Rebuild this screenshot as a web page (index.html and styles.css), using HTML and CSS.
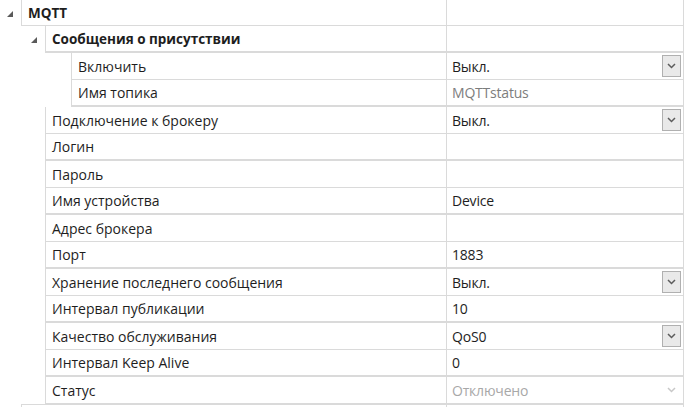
FILE: index.html
```html
<!DOCTYPE html>
<html lang="ru">
<head>
  <meta charset="utf-8">
  <title>MQTT</title>
  <link rel="stylesheet" href="styles.css">
</head>
<body>
  <div class="grid">
    <div class="row first">
      <div class="indent i1"><svg class="tri" width="6" height="6" viewBox="0 0 6 6"><polygon points="6,0 6,6 0,6"/></svg></div>
      <div class="line cat"><div class="name">MQTT</div><div class="value"></div></div>
    </div>
    <div class="row thick">
      <div class="indent i2"><svg class="tri" width="6" height="6" viewBox="0 0 6 6"><polygon points="6,0 6,6 0,6"/></svg></div>
      <div class="line cat"><div class="name">Сообщения о присутствии</div><div class="value"></div></div>
    </div>
    <div class="row">
      <div class="indent i3"></div>
      <div class="line"><div class="name">Включить</div><div class="value">Выкл.<span class="drop"><svg width="9" height="6" viewBox="0 0 9 6"><polyline points="1,1 4.5,4.5 8,1"/></svg></span></div></div>
    </div>
    <div class="row thick">
      <div class="indent i3"></div>
      <div class="line"><div class="name">Имя топика</div><div class="value muted">MQTTstatus</div></div>
    </div>
    <div class="row">
      <div class="indent i2"></div>
      <div class="line"><div class="name">Подключение к брокеру</div><div class="value">Выкл.<span class="drop"><svg width="9" height="6" viewBox="0 0 9 6"><polyline points="1,1 4.5,4.5 8,1"/></svg></span></div></div>
    </div>
    <div class="row thick">
      <div class="indent i2"></div>
      <div class="line"><div class="name">Логин</div><div class="value"></div></div>
    </div>
    <div class="row">
      <div class="indent i2"></div>
      <div class="line"><div class="name">Пароль</div><div class="value"></div></div>
    </div>
    <div class="row thick">
      <div class="indent i2"></div>
      <div class="line"><div class="name">Имя устройства</div><div class="value">Device</div></div>
    </div>
    <div class="row">
      <div class="indent i2"></div>
      <div class="line"><div class="name">Адрес брокера</div><div class="value"></div></div>
    </div>
    <div class="row thick">
      <div class="indent i2"></div>
      <div class="line"><div class="name">Порт</div><div class="value">1883</div></div>
    </div>
    <div class="row">
      <div class="indent i2"></div>
      <div class="line"><div class="name">Хранение последнего сообщения</div><div class="value">Выкл.<span class="drop"><svg width="9" height="6" viewBox="0 0 9 6"><polyline points="1,1 4.5,4.5 8,1"/></svg></span></div></div>
    </div>
    <div class="row thick">
      <div class="indent i2"></div>
      <div class="line"><div class="name">Интервал публикации</div><div class="value">10</div></div>
    </div>
    <div class="row">
      <div class="indent i2"></div>
      <div class="line"><div class="name">Качество обслуживания</div><div class="value">QoS0<span class="drop"><svg width="9" height="6" viewBox="0 0 9 6"><polyline points="1,1 4.5,4.5 8,1"/></svg></span></div></div>
    </div>
    <div class="row thick">
      <div class="indent i2"></div>
      <div class="line"><div class="name">Интервал Keep Alive</div><div class="value">0</div></div>
    </div>
    <div class="row">
      <div class="indent i2"></div>
      <div class="line"><div class="name">Статус</div><div class="value disabled">Отключено<span class="drop off"><svg width="9" height="6" viewBox="0 0 9 6"><polyline points="1,1 4.5,4.5 8,1"/></svg></span></div></div>
    </div>
    <div class="row tail">
      <div class="indent i1"></div>
      <div class="line"><div class="name"></div><div class="value"></div></div>
    </div>
  </div>
</body>
</html>
```

FILE: styles.css
```css
html, body {
  margin: 0;
  padding: 0;
  background: #fff;
}

.grid {
  width: 684px;
  height: 407px;
  overflow: hidden;
  font-family: "Open Sans", "Noto Sans", sans-serif;
  font-size: 14px;
  color: #1e1e1e;
}

.row {
  display: flex;
  height: 27px;
}

.row.first {
  height: 26px;
}

.row.tail {
  border-top: 1px solid #dadada;
  margin-left: 21px;
}

.row.tail .indent {
  display: none;
}

.indent {
  flex: none;
  display: flex;
  align-items: center;
}

.i1 { width: 21px; padding-left: 7px; box-sizing: border-box; }
.i2 { width: 45px; padding-left: 31px; box-sizing: border-box; }
.i3 { width: 71px; }

.tri {
  fill: #5a5a5a;
  margin-top: 1px;
}

.line {
  flex: 1;
  display: flex;
  box-sizing: border-box;
  border-left: 1px solid #dadada;
  border-bottom: 1px solid #dadada;
}

.row.thick .line {
  border-bottom: 2px solid #dadada;
}

.name {
  flex: 1;
  padding-left: 6px;
  display: flex;
  align-items: center;
  white-space: nowrap;
  overflow: hidden;
}

.cat .name {
  font-weight: bold;
  font-size: 13.5px;
}

.value {
  flex: none;
  width: 238px;
  box-sizing: border-box;
  border-left: 1px solid #dadada;
  border-right: 1px solid #dadada;
  padding-left: 5px;
  padding-right: 2px;
  display: flex;
  align-items: center;
  justify-content: space-between;
  letter-spacing: -0.2px;
}

.value.muted {
  color: #7d7d7d;
}

.value.disabled {
  color: #a8a8a8;
}

.drop {
  width: 19px;
  height: 22px;
  box-sizing: border-box;
  border: 1px solid #b0b0b0;
  background: #e9e9e9;
  display: flex;
  align-items: center;
  justify-content: center;
}

.drop polyline {
  fill: none;
  stroke: #5c5c5c;
  stroke-width: 1.5;
}

.drop.off {
  border-color: transparent;
  background: none;
}

.drop.off polyline {
  stroke: #c8c8c8;
}
```
